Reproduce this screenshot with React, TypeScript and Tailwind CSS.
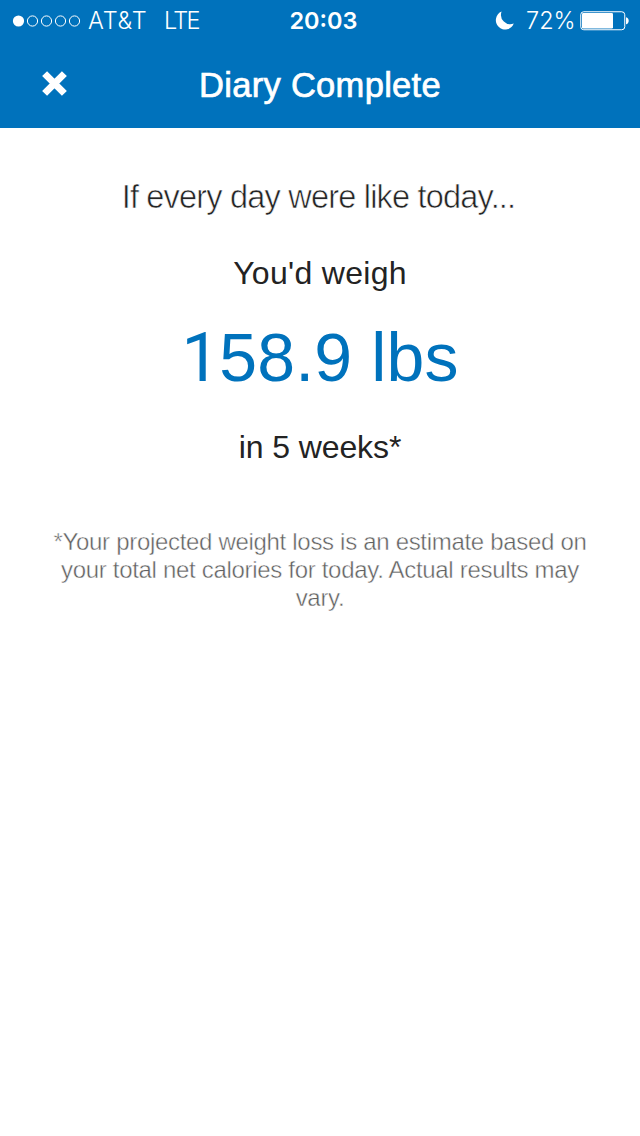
function SignalDots() {
  return (
    <svg width="69" height="12" viewBox="0 0 69 12" className="shrink-0" aria-hidden="true">
      <circle cx="6.5" cy="6" r="5.6" fill="#fff" />
      {[20.5, 34.5, 48.5, 62.5].map((cx) => (
        <circle key={cx} cx={cx} cy="6" r="5.1" fill="none" stroke="#fff" strokeWidth="1" />
      ))}
    </svg>
  );
}

function Moon() {
  return (
    <svg width="19" height="19" viewBox="0 0 19 19" className="shrink-0" aria-hidden="true">
      <path d="M6.6 0.6A9.3 9.3 0 1 0 18.8 12.6A9.4 9.4 0 0 1 6.6 0.6Z" fill="#fff" />
    </svg>
  );
}

function Battery() {
  return (
    <svg width="50" height="20" viewBox="0 0 50 20" className="shrink-0" aria-hidden="true">
      <rect x="0.75" y="0.75" width="44" height="18" rx="3" fill="none" stroke="#fff" strokeWidth="1" />
      <rect x="2" y="2" width="31" height="15.5" rx="1.2" fill="#fff" />
      <path d="M46 6.2C49.6 6.8 49.6 12.7 46 13.3Z" fill="#fff" />
    </svg>
  );
}

function StatusBar() {
  return (
    <div className="grid h-10 grid-cols-[289px_69px_1fr] font-['Inter',sans-serif] text-[23.5px] leading-[41px] text-white">
      <div className="flex items-center pl-3 font-light">
        <SignalDots />
        <span className="ml-[7px] w-[76px] tracking-[0.8px]">AT&amp;T</span>
        <span className="tracking-[-1.7px]">LTE</span>
      </div>
      <div className="text-center font-semibold whitespace-nowrap">20:03</div>
      <div className="flex items-center justify-end pr-[10px]">
        <Moon />
        <span className="ml-3 w-[54px] font-light">72%</span>
        <Battery />
      </div>
    </div>
  );
}

export default function App() {
  return (
    <div className="flex h-[1136px] w-[640px] flex-col bg-white font-['Liberation_Sans',Arial,sans-serif] text-[#232323]">
      <header className="h-32 bg-[#0072bc]">
        <StatusBar />
        <div className="grid h-[88px] grid-cols-[110px_1fr_110px] items-center text-white">
          <button className="flex h-[88px] items-center pb-[2px] pl-[42px]" aria-label="Close">
            <svg width="26" height="26" viewBox="0 0 26 26" aria-hidden="true">
              <path d="M2.6 2.6L22.4 22.4M22.4 2.6L2.6 22.4" stroke="#fff" strokeWidth="7" />
            </svg>
          </button>
          <h1 className="text-center text-[34.5px] leading-[90px] font-normal tracking-[0.3px] whitespace-nowrap [-webkit-text-stroke:0.7px_white]">
            Diary Complete
          </h1>
        </div>
      </header>
      <main className="flex flex-col items-center text-center whitespace-nowrap">
        <p className="mt-[49px] pr-[3px] text-[32.5px] leading-10 tracking-[-0.8px] [-webkit-text-stroke:0.6px_white]">
          If every day were like today...
        </p>
        <p className="mt-9 text-[32px] leading-10 tracking-[0.3px]">You'd weigh</p>
        <p className="mt-6 text-[68px] leading-[80px] tracking-[0.15px] text-[#0072bc]">
          <span className="-mr-[0.5px] font-['Roboto',sans-serif]">1</span>58.9 lbs
        </p>
        <p className="mt-[29px] text-[32px] leading-10 tracking-[-0.1px]">in 5 weeks*</p>
        <div className="mt-[61px] text-[24px] leading-7 tracking-[-0.31px] text-[#606060] [-webkit-text-stroke:0.45px_white]">
          <p>*Your projected weight loss is an estimate based on</p>
          <p>your total net calories for today. Actual results may</p>
          <p>vary.</p>
        </div>
      </main>
    </div>
  );
}
